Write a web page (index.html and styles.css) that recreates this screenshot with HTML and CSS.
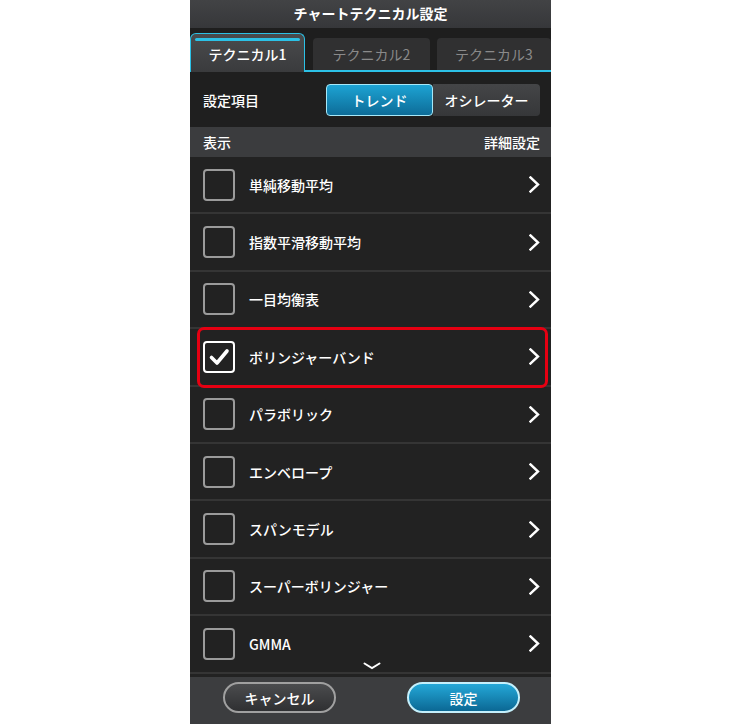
FILE: index.html
```html
<!DOCTYPE html>
<html lang="ja">
<head>
  <meta charset="UTF-8" />
  <meta name="viewport" content="width=device-width, initial-scale=1" />
  <title>チャートテクニカル設定</title>
  <link rel="stylesheet" href="styles.css">
</head>
<body>

<div class="phone">
  <header class="title-bar">チャートテクニカル設定</header>

  <nav class="tabs">
    <a class="tab active"><span>テクニカル1</span></a>
    <a class="tab">テクニカル2</a>
    <a class="tab">テクニカル3</a>
  </nav>

  <div class="setting-row">
    <span>設定項目</span>
    <div class="segment">
      <button class="seg active">トレンド</button>
      <button class="seg">オシレーター</button>
    </div>
  </div>

  <div class="list-head">
    <span>表示</span>
    <span>詳細設定</span>
  </div>

  <div class="list-wrap">
    <ul class="list">
      <li class="item"><span class="check"></span><span class="label">単純移動平均</span><svg class="chev" viewBox="0 0 11 17"><polyline points="1.5,1.5 9,8.5 1.5,15.5" /></svg></li>
      <li class="item"><span class="check"></span><span class="label">指数平滑移動平均</span><svg class="chev" viewBox="0 0 11 17"><polyline points="1.5,1.5 9,8.5 1.5,15.5" /></svg></li>
      <li class="item"><span class="check"></span><span class="label">一目均衡表</span><svg class="chev" viewBox="0 0 11 17"><polyline points="1.5,1.5 9,8.5 1.5,15.5" /></svg></li>
      <li class="item marked">
        <span class="check on"><svg viewBox="0 0 24 24"><polyline points="4.5,12.5 10,18 20,6" /></svg></span>
        <span class="label">ボリンジャーバンド</span>
        <svg class="chev" viewBox="0 0 11 17"><polyline points="1.5,1.5 9,8.5 1.5,15.5" /></svg>
      </li>
      <li class="item"><span class="check"></span><span class="label">パラボリック</span><svg class="chev" viewBox="0 0 11 17"><polyline points="1.5,1.5 9,8.5 1.5,15.5" /></svg></li>
      <li class="item"><span class="check"></span><span class="label">エンベロープ</span><svg class="chev" viewBox="0 0 11 17"><polyline points="1.5,1.5 9,8.5 1.5,15.5" /></svg></li>
      <li class="item"><span class="check"></span><span class="label">スパンモデル</span><svg class="chev" viewBox="0 0 11 17"><polyline points="1.5,1.5 9,8.5 1.5,15.5" /></svg></li>
      <li class="item"><span class="check"></span><span class="label">スーパーボリンジャー</span><svg class="chev" viewBox="0 0 11 17"><polyline points="1.5,1.5 9,8.5 1.5,15.5" /></svg></li>
      <li class="item"><span class="check"></span><span class="label">GMMA</span><svg class="chev" viewBox="0 0 11 17"><polyline points="1.5,1.5 9,8.5 1.5,15.5" /></svg></li>
    </ul>
    <svg class="more" viewBox="0 0 18 8"><polyline points="1.5,1.5 9,6 16.5,1.5" /></svg>
  </div>

  <footer class="actions">
    <button class="btn cancel">キャンセル</button>
    <button class="btn ok">設定</button>
  </footer>
</div>

</body>
</html>
```

FILE: styles.css
```css
* {
  margin: 0; padding: 0; box-sizing: border-box;
}
body {
  background: #fff;
  font-family: "Noto Sans CJK JP", "Noto Sans", sans-serif;
  color: #fff;
}

.phone {
  width: 361px;
  height: 724px;
  margin-left: 190px;
  background: #222;
  display: flex;
  flex-direction: column;
  overflow: hidden;
}

.title-bar {
  height: 28px;
  background: linear-gradient(#424345, #36373a);
  text-align: center;
  font-size: 14px;
  font-weight: 700;
  line-height: 27px;
}

/* tabs */
.tabs {
  height: 44px;
  background: #1e1e1e;
  display: flex;
  align-items: flex-end;
  gap: 8px;
  border-bottom: 2px solid #2cc1e6;
}
.tab {
  width: 117px;
  height: 32px;
  background: #303031;
  border-radius: 4px 4px 0 0;
  color: #8a8a8a;
  font-size: 14px;
  font-weight: 400;
  text-align: center;
  line-height: 33px;
}
.tab:last-child {
  flex: 1;
  margin-left: -1px;
}
.tab.active {
  width: 115px;
  height: 39px;
  margin-bottom: -2px;
  background: linear-gradient(#4a4b4d, #3a3b3d);
  border: 1.5px solid #2cc1e6;
  border-bottom: none;
  border-radius: 6px 6px 0 0;
  color: #fff;
  font-weight: 500;
  display: flex;
  flex-direction: column;
  line-height: 1;
}
.tab.active::before {
  content: '';
  display: block;
  height: 3px;
  margin: 4px 4px 0;
  background: #2cc1e6;
  border-radius: 2px;
}
.tab.active span {
  line-height: 27px;
}

/* setting row */
.setting-row {
  height: 55px;
  background: #1f1f1f;
  display: flex;
  align-items: center;
  justify-content: space-between;
  padding: 0 11px 0 13px;
  font-size: 14px;
  font-weight: 500;
}
.segment {
  display: flex;
}
.seg {
  height: 32px;
  font-family: inherit;
  font-size: 14px;
  font-weight: 500;
  color: #fff;
  border: none;
}
.seg.active {
  width: 107px;
  background: linear-gradient(#1da3d3, #0d6c98);
  border: 1.5px solid #a6e8f8;
  border-radius: 4px;
}
.seg:not(.active) {
  width: 107px;
  background: linear-gradient(#444547, #363739);
  border-radius: 0 4px 4px 0;
}

.list-head {
  height: 30px;
  background: #3b3c3e;
  display: flex;
  align-items: center;
  justify-content: space-between;
  padding: 0 11px 0 13px;
  font-size: 14px;
  font-weight: 500;
}

/* list */
.list-wrap {
  flex: 1;
  position: relative;
  overflow: hidden;
}
.list {
  list-style: none;
}
.item {
  height: 57.4px;
  display: flex;
  align-items: center;
  padding: 0 11px 0 13px;
  border-bottom: 2px solid #353535;
  background: #222;
}
.check {
  width: 32px;
  height: 32px;
  border: 2px solid #9b9b9b;
  border-radius: 4px;
  margin-right: 14px;
  flex-shrink: 0;
}
.check.on {
  border-color: #fff;
  display: flex;
  align-items: center;
  justify-content: center;
}
.check svg {
  width: 24px;
  height: 24px;
  fill: none;
  stroke: #fff;
  stroke-width: 3.6;
  stroke-linecap: round;
  stroke-linejoin: round;
}
.label {
  flex: 1;
  font-size: 14px;
  font-weight: 500;
}
.chev {
  width: 11px;
  height: 17px;
  fill: none;
  stroke: #fff;
  stroke-width: 2.4;
  stroke-linecap: square;
}

.item.marked {
  position: relative;
}
.item.marked::after {
  content: '';
  position: absolute;
  left: 7px;
  right: 3px;
  top: -2px;
  bottom: -3px;
  border: 3.5px solid #e60012;
  border-radius: 7px;
}

.more {
  position: absolute;
  left: 173px;
  bottom: 7px;
  width: 18px;
  height: 8px;
  fill: none;
  stroke: #fff;
  stroke-width: 2;
  stroke-linecap: round;
}

/* footer */
.actions {
  height: 47px;
  background: #3c3d3f;
  display: flex;
  justify-content: space-between;
  padding: 5px 31px 0 33px;
}
.btn {
  width: 113px;
  height: 31px;
  border-radius: 16px;
  font-family: inherit;
  font-size: 14px;
  font-weight: 500;
  color: #fff;
}
.btn.cancel {
  background: linear-gradient(#4b4c4e, #2f3032);
  border: 2px solid #a0a0a0;
}
.btn.ok {
  background: linear-gradient(#24a8d8, #0b6894);
  border: 2px solid #c4f0fc;
}
```
